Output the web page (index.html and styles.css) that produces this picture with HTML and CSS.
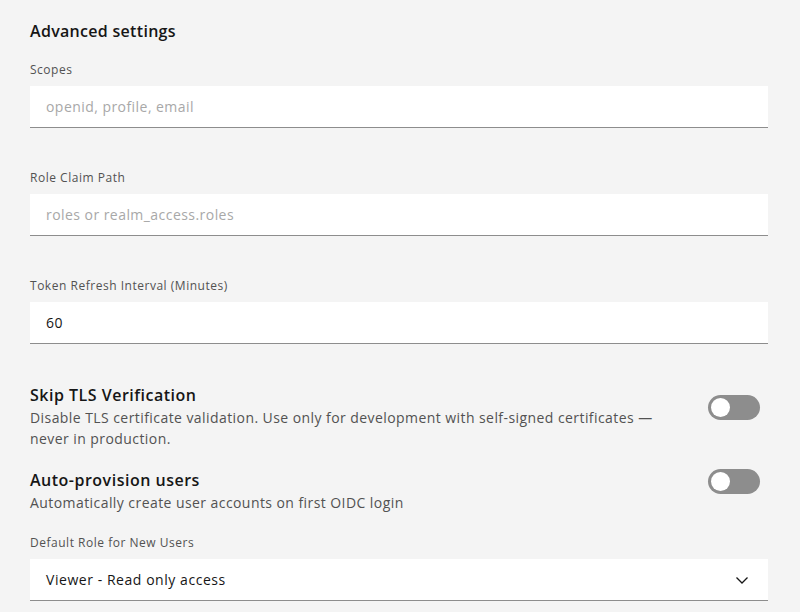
FILE: index.html
```html
<!DOCTYPE html>
<html lang="en">
<head>
<meta charset="utf-8">
<title>Advanced settings</title>
<link rel="stylesheet" href="styles.css">
</head>
<body>
<main class="panel">
  <h2 class="heading">Advanced settings</h2>

  <div class="field">
    <label class="label" for="scopes">Scopes</label>
    <input class="input" id="scopes" type="text" placeholder="openid, profile, email">
  </div>

  <div class="field">
    <label class="label" for="role-claim">Role Claim Path</label>
    <input class="input" id="role-claim" type="text" placeholder="roles or realm_access.roles">
  </div>

  <div class="field">
    <label class="label" for="refresh">Token Refresh Interval (Minutes)</label>
    <input class="input" id="refresh" type="text" value="60">
  </div>

  <div class="toggle-row first">
    <div class="toggle-text">
      <div class="toggle-title">Skip TLS Verification</div>
      <div class="toggle-desc">Disable TLS certificate validation. Use only for development with self-signed certificates — never in production.</div>
    </div>
    <span class="toggle" role="switch" aria-checked="false"><span class="knob"></span></span>
  </div>

  <div class="toggle-row second">
    <div class="toggle-text">
      <div class="toggle-title">Auto-provision users</div>
      <div class="toggle-desc">Automatically create user accounts on first OIDC login</div>
    </div>
    <span class="toggle" role="switch" aria-checked="false"><span class="knob"></span></span>
  </div>

  <div class="field last">
    <label class="label" for="role">Default Role for New Users</label>
    <div class="select">
      <span class="select-value">Viewer - Read only access</span>
      <svg class="chevron" width="16" height="16" viewBox="0 0 16 16" aria-hidden="true">
        <path d="M2.5 5.5 L8 11 L13.5 5.5" fill="none" stroke="#161616" stroke-width="1.3"/>
      </svg>
    </div>
  </div>
</main>
</body>
</html>
```

FILE: styles.css
```css
html, body {
  margin: 0;
  padding: 0;
  background: #f4f4f4;
}

body {
  font-family: "Open Sans", "Noto Sans", sans-serif;
  color: #161616;
}

.panel {
  padding: 19px 32px 0 30px;
  display: flex;
  flex-direction: column;
}

.heading {
  margin: 0 0 19px;
  font-size: 16px;
  font-weight: 600;
  line-height: 24px;
  letter-spacing: 0.3px;
}

.field {
  display: flex;
  flex-direction: column;
  margin-bottom: 42px;
}

.field.last {
  margin-bottom: 0;
}

.label {
  font-size: 12px;
  line-height: 16px;
  color: #525252;
  letter-spacing: 0.52px;
  margin-bottom: 8px;
}

.input {
  box-sizing: border-box;
  height: 42px;
  border: none;
  border-bottom: 1px solid #8d8d8d;
  background: #ffffff;
  padding: 0 16px;
  font-family: inherit;
  font-size: 14px;
  color: #161616;
  letter-spacing: 0.45px;
  outline: none;
}

.input::placeholder {
  color: #a8a8a8;
}

.toggle-row {
  display: flex;
  align-items: center;
  gap: 40px;
}

.toggle-row.first {
  margin-top: -3px;
  margin-bottom: 19px;
}

.toggle-row.second {
  margin-bottom: 22px;
}

.toggle-text {
  flex: 1;
}

.toggle-title {
  font-size: 16px;
  font-weight: 600;
  line-height: 24px;
  letter-spacing: 0.5px;
}

.toggle-desc {
  font-size: 14px;
  line-height: 21px;
  color: #525252;
  letter-spacing: 0.43px;
}

.toggle {
  flex: none;
  position: relative;
  width: 52px;
  height: 25px;
  border-radius: 13px;
  background: #8d8d8d;
  margin-right: 8px;
  margin-bottom: 18px;
}

.knob {
  position: absolute;
  left: 3px;
  top: 3px;
  width: 19px;
  height: 19px;
  border-radius: 50%;
  background: #ffffff;
}

.select {
  box-sizing: border-box;
  height: 42px;
  background: #ffffff;
  border-bottom: 1px solid #8d8d8d;
  padding: 0 18px 0 16px;
  display: flex;
  align-items: center;
  justify-content: space-between;
}

.select-value {
  font-size: 14px;
  color: #161616;
  letter-spacing: 0.55px;
}

.chevron {
  flex: none;
}
```
